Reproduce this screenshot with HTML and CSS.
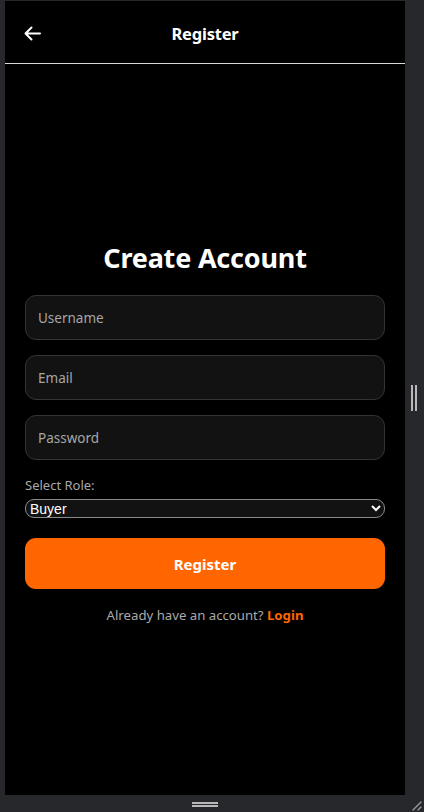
FILE: index.html
```html
<!DOCTYPE html>
<html lang="en">
<head>
<meta charset="utf-8">
<title>Register</title>
<link rel="stylesheet" href="styles.css">
</head>
<body>
<div class="shell">
  <div class="device">
    <header class="topbar">
      <button class="back" aria-label="Back">
        <svg width="17" height="15" viewBox="0 0 17 15" fill="none" stroke="#fff" stroke-width="2" stroke-linecap="round" stroke-linejoin="round"><path d="M16 7.5H1.5M7.5 1.5 1.5 7.5 7.5 13.5"/></svg>
      </button>
      <h1 class="title">Register</h1>
      <span class="spacer"></span>
    </header>
    <main class="content">
      <form class="form">
        <h2 class="heading">Create Account</h2>
        <input class="field" type="text" placeholder="Username">
        <input class="field" type="email" placeholder="Email">
        <input class="field last" type="password" placeholder="Password">
        <label class="label" for="role">Select Role:</label>
        <select class="select" id="role">
          <option>Buyer</option>
          <option>Seller</option>
        </select>
        <button class="submit" type="button">Register</button>
        <p class="alt">Already have an account? <a href="#" class="link">Login</a></p>
      </form>
    </main>
  </div>
  <div class="side-grip"><i></i><i></i></div>
  <div class="bottom-grip"></div>
  <div class="corner-grip">
    <svg width="12" height="12" viewBox="0 0 12 12" stroke="#9a9a9a" stroke-width="1.4" stroke-linecap="round"><path d="M11 3 3 11M11 8 8 11"/></svg>
  </div>
</div>
</body>
</html>
```

FILE: styles.css
```css
* { box-sizing: border-box; }
html, body {
  margin: 0;
  padding: 0;
  background: #27282c;
  width: 424px;
  height: 812px;
  overflow: hidden;
}
.shell {
  position: relative;
  width: 424px;
  height: 812px;
  padding: 1px 19px 17px 5px;
}
.device {
  width: 400px;
  height: 794px;
  background: #000;
  display: flex;
  flex-direction: column;
  font-family: "Noto Sans", "Open Sans", sans-serif;
  color: #fff;
}
.topbar {
  height: 63px;
  flex: 0 0 63px;
  border-bottom: 1px solid #d9d9d9;
  display: flex;
  align-items: center;
  padding: 2px 16px 0 16px;
}
.back {
  background: none;
  border: 0;
  padding: 0;
  width: 20px;
  height: 24px;
  display: flex;
  align-items: center;
  justify-content: center;
  margin-left: 1px;
  cursor: pointer;
}
.title {
  flex: 1;
  margin: 0;
  text-align: center;
  font-size: 16.5px;
  font-weight: 700;
  letter-spacing: -0.2px;
}
.spacer { width: 21px; }
.content {
  flex: 1;
  display: flex;
  align-items: center;
  justify-content: center;
  padding: 0 20px 0 20px;
}
.form {
  width: 100%;
  display: flex;
  flex-direction: column;
  margin-top: 6px;
}
.heading {
  margin: 0 0 20px;
  text-align: center;
  font-size: 27px;
  font-weight: 700;
  line-height: 34px;
  letter-spacing: -0.2px;
}
.field {
  height: 45px;
  margin-bottom: 15px;
  background: #121212;
  border: 1px solid #333;
  border-radius: 11px;
  padding: 0 12px;
  color: #fff;
  font-family: inherit;
  font-size: 13.5px;
  outline: none;
}
.field.last { margin-bottom: 16px; }
.field::placeholder { color: #a6a6a6; }
.label {
  color: #a9a9a9;
  font-size: 13px;
  line-height: 18px;
  margin: 0 0 5px;
}
.select {
  height: 19px;
  background: #121212;
  color: #fff;
  color-scheme: dark;
  border: 1px solid #8a8a8a;
  border-radius: 9px;
  font-family: "Liberation Sans", Arial, sans-serif;
  font-size: 14px;
  font-weight: 400;
  padding: 0;
  margin-bottom: 20px;
}
.submit {
  height: 51px;
  background: #ff6600;
  border: 0;
  border-radius: 11px;
  color: #fff;
  font-family: inherit;
  font-size: 15px;
  font-weight: 700;
  margin-bottom: 17px;
  cursor: pointer;
}
.alt {
  margin: 0;
  text-align: center;
  color: #a9a9a9;
  font-size: 13.2px;
  line-height: 18px;
}
.link {
  color: #ff6600;
  font-weight: 700;
  text-decoration: none;
}
.side-grip {
  position: absolute;
  left: 411px;
  top: 385px;
  display: flex;
  gap: 2px;
}
.side-grip i {
  display: block;
  width: 2px;
  height: 26px;
  background: #b8b8b8;
}
.bottom-grip {
  position: absolute;
  left: 192px;
  top: 802px;
  width: 26px;
  height: 5px;
  border-top: 2px solid #b8b8b8;
  border-bottom: 2px solid #b8b8b8;
}
.corner-grip {
  position: absolute;
  left: 410px;
  top: 799px;
  width: 12px;
  height: 12px;
}
.corner-grip svg { display: block; }
```
